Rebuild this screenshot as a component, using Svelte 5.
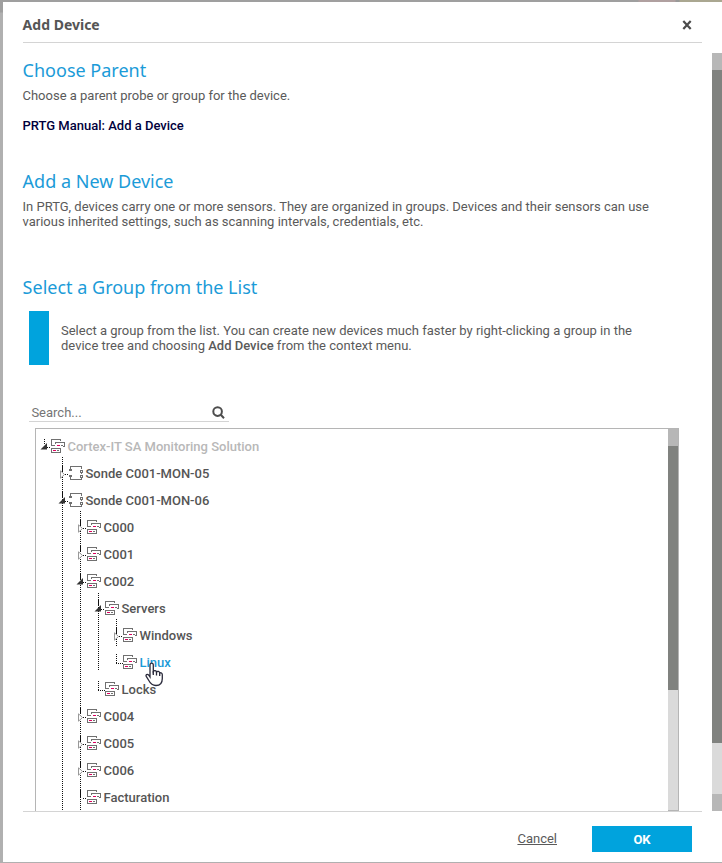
<script>
  // guides: depths whose vertical line passes through the row
  const rows = [
    { name: 'Cortex-IT SA Monitoring Solution', depth: 0, state: 'open', icon: 'group', tone: 'muted', guides: [] },
    { name: 'Sonde C001-MON-05', depth: 1, state: 'closed', icon: 'probe', guides: [1], first: true },
    { name: 'Sonde C001-MON-06', depth: 1, state: 'open', icon: 'probe', guides: [1] },
    { name: 'C000', depth: 2, state: 'closed', icon: 'group', guides: [1, 2], first: true },
    { name: 'C001', depth: 2, state: 'closed', icon: 'group', guides: [1, 2] },
    { name: 'C002', depth: 2, state: 'open', icon: 'group', guides: [1, 2] },
    { name: 'Servers', depth: 3, state: 'open', icon: 'group', guides: [1, 2, 3], first: true },
    { name: 'Windows', depth: 4, state: 'closed', icon: 'group', guides: [1, 2, 3, 4], first: true },
    { name: 'Linux', depth: 4, state: 'leaf', icon: 'group', tone: 'active', guides: [1, 2, 3] },
    { name: 'Locks', depth: 3, state: 'leaf', icon: 'group', guides: [1, 2] },
    { name: 'C004', depth: 2, state: 'closed', icon: 'group', guides: [1, 2] },
    { name: 'C005', depth: 2, state: 'closed', icon: 'group', guides: [1, 2] },
    { name: 'C006', depth: 2, state: 'closed', icon: 'group', guides: [1, 2] },
    { name: 'Facturation', depth: 2, state: 'line', icon: 'group', guides: [1, 2] }
  ];
  const guideTop = (row, g) => (row.first && g === row.depth ? -3 : 0);
  const guideEnd = (row, g) => (row.name === 'Linux' && g === 3 ? 21 : row.name === 'Windows' && g === 4 ? 25 : 27);
  // keeps the dotted pattern continuous across rows of odd height
  const phase = (row, g, i) => (i + (row.first && g === row.depth ? 1 : 0)) % 2;
</script>

<div class="page">
  <div class="dialog">
    <header>
      <h1>Add Device</h1>
      <svg class="close" width="10" height="10" viewBox="0 0 10 10"><path d="M1.3 1L8.7 9M8.7 1L1.3 9" /></svg>
    </header>
    <div class="body">
      <main>
        <h2>Choose Parent</h2>
        <p>Choose a parent probe or group for the device.</p>
        <p class="manual">PRTG Manual: Add a Device</p>
        <h2 class="second">Add a New Device</h2>
        <p>In PRTG, devices carry one or more sensors. They are organized in groups. Devices and their sensors can use<br />various inherited settings, such as scanning intervals, credentials, etc.</p>
        <h2 class="third">Select a Group from the List</h2>
        <div class="hint">
          <i></i>
          <p>Select a group from the list. You can create new devices much faster by right-clicking a group in the<br />device tree and choosing <b>Add Device</b> from the context menu.</p>
        </div>
        <div class="search">
          <span>Search...</span>
          <svg width="14" height="14" viewBox="0 0 14 14"><circle cx="5.6" cy="5.6" r="4.3" /><path d="M8.8 8.8L12 12.2" /></svg>
        </div>
        <div class="tree">
          <div class="rows">
            {#each rows as row, i}
              {@const x = row.depth * 18}
              <div class="row {row.tone ?? ''}">
                <svg width={x + 32} height="27" shape-rendering="crispEdges">
                  {#each row.guides as g}
                    <path class="dots" stroke-dashoffset={phase(row, g, i)} d="M{g * 18 + 8.5} {guideTop(row, g)}V{guideEnd(row, g)}" />
                  {/each}
                  {#if row.state === 'leaf'}
                    <path class="dots" d="M{x + 8.5} 5V15" />
                    <path class="dots" d="M{x + 8} 14.5H{x + 15}" />
                  {:else}
                    <path class="dots" d="M{x + 11} 14.5H{x + 15}" />
                    {#if row.depth === 0}
                      <path class="dots" d="M8.5 6V12" />
                    {:else}
                      <path class="stem" d="M{x + 8.5} 5V{row.state === 'line' ? 14 : 11}" />
                    {/if}
                  {/if}
                  {#if row.state === 'open'}
                    <path class="open" shape-rendering="auto" d="M{x + 11} 10V16.5H{x + 4.5}Z" />
                  {:else if row.state === 'closed'}
                    <path class="closed" shape-rendering="auto" d="M{x + 6.5} 10.8V18.2L{x + 10.5} 14.5Z" />
                  {/if}
                  <g transform="translate({x + 15} 6)">
                    {#if row.icon === 'group'}
                      <path class="ink" d="M9.5 2V.5H.5V6.5H4M4.5 5V3.5H13.5V7.5H12M.5 9.5H9.5V13.5H.5Z" />
                      <path class="pink" d="M6 6.5H9M2 11.5H5" />
                      <path class="ink" d="M10 6.5H12M6 11.5H8" />
                    {:else}
                      <path class="ink" d="M1.5 3V.5H12.5V3M1.5 11V13.5H12.5V11M12.5 7V8M.5 3.5H2.5V4.5H.5ZM.5 9.5H2.5V10.5H.5ZM11.5 4.5H13.5V6.5H11.5ZM11.5 9.5H13.5V11.5H11.5Z" />
                    {/if}
                  </g>
                </svg>
                <span>{row.name}</span>
              </div>
            {/each}
            <svg class="cursor" width="20" height="26" viewBox="0 0 20 26">
              <path d="M5 15V3.2C5 .5 8.3.5 8.3 3.2V9.5C9.2 8.1 11.2 8.5 11.5 10C12.5 8.9 14.4 9.4 14.7 11C15.9 10.3 17.3 11.1 17.3 12.8V16.5C17.3 21 14.7 23.5 11 23.5C7.3 23.5 5.5 21.8 3.8 18.5L1.4 14.7C.3 12.8 2.2 11.5 3.6 13Z" />
              <path d="M8.3 9V13M11.5 10V13.5M14.7 11V14" />
            </svg>
          </div>
          <div class="bar inner"><i class="cap"></i><i class="thumb"></i><i class="track"></i><i class="sill"></i></div>
        </div>
      </main>
      <div class="bar outer"><i class="cap"></i><i class="thumb"></i><i class="track"></i><i class="cap"></i></div>
    </div>
    <footer>
      <span class="cancel">Cancel</span>
      <span class="ok">OK</span>
    </footer>
  </div>
</div>

<style>
  :global(body) { margin: 0; }
  * { box-sizing: border-box; }
  .page {
    width: 722px; height: 863px; padding: 2px 0 1px 3px; overflow: hidden;
    background: linear-gradient(90deg, transparent 638px, #b0a0a0 639px 675px, #999 676px 679px, #aaa791 680px) 0 0 / 722px 2px no-repeat,
      linear-gradient(#9f9f9f 12px, #b0b0b0 13px);
    font: 13px/15px Roboto, sans-serif; color: #5a5a5a;
  }
  .dialog { height: 860px; background: #fff; display: flex; flex-direction: column; }
  header {
    height: 41px; flex: none; margin: 0 20px; padding: 0 10px 0 0; border-bottom: 1px solid #d4d4d4;
    display: flex; justify-content: space-between; align-items: center;
  }
  h1 { margin: 5px 0 0 -0.4px; font: 700 14px/20px "Noto Sans", "Open Sans", sans-serif; color: #555; }
  .close { margin-top: 6px; fill: none; stroke: #4b4b4b; stroke-width: 2.2; }
  .body { height: 758px; margin-top: 10px; flex: none; display: flex; justify-content: space-between; overflow: hidden; }
  main { width: 656px; margin-left: 20px; }
  h2 { margin: 5px 0 0 -0.4px; font: 400 18px/24px "Noto Sans", "Open Sans", sans-serif; color: #1b9bd8; white-space: nowrap; }
  p { margin: 6px 0 0 -0.5px; white-space: nowrap; }
  .manual { margin-top: 15px; color: #00003c; font-weight: 500; }
  .second { margin-top: 36px; }
  .third { margin-top: 46px; }
  .hint { display: flex; margin: 12px 0 0 6px; height: 54px; }
  .hint i { width: 20px; background: #00a3dd; }
  .hint p { margin: 12px 0 0 12px; }
  b { font-weight: 500; }
  .search {
    width: 200px; height: 17px; margin: 40px 0 0 6px; padding: 0 3px 0 2.4px; border-bottom: 1px solid #d4d4d4;
    display: flex; justify-content: space-between; color: #757575;
  }
  .search svg { margin-top: 1px; fill: none; stroke: #4d4d4d; stroke-width: 2; }
  .tree { width: 644px; height: 383px; margin: 6px 0 0 12px; border: 1px solid #b5b5b5; border-bottom: 0; display: flex; justify-content: space-between; }
  .rows { position: relative; padding-top: 4px; }
  .row { height: 27px; display: flex; align-items: center; font-weight: 500; color: #555; }
  .row svg { overflow: visible; flex: none; }
  .row span { margin-left: -0.5px; }
  .muted { color: #b8b8b8; }
  .active { color: #1b9bd8; }
  .dots { stroke: #111; stroke-dasharray: 1 1; }
  .stem { stroke: #111; }
  .open { fill: #333; }
  .closed { fill: #fff; stroke: #999; }
  .ink { fill: none; stroke: #707070; }
  .pink { stroke: #e0005f; }
  .cursor { position: absolute; left: 109px; top: 233px; fill: #fff; stroke: #29293a; stroke-width: 1.3; }
  .bar { width: 10px; flex: none; display: flex; flex-direction: column; }
  .cap { height: 17px; background: #b7b7b7; }
  .thumb { background: #80827f; }
  .track { flex: 1; background: #dadada; }
  .inner .thumb { height: 244px; }
  .outer .thumb { height: 673px; }
  .sill { height: 1px; background: #b5b5b5; }
  footer {
    height: 51px; flex: none; margin: 0 20px; padding: 14px 10px 0 0; border-top: 1px solid #d4d4d4;
    display: flex; justify-content: flex-end;
  }
  .cancel { margin-right: 35px; line-height: 26px; text-decoration: underline; }
  .ok { width: 100px; height: 26px; background: #00a3dd; color: #fff; font-weight: 700; line-height: 28px; text-align: center; }
</style>
